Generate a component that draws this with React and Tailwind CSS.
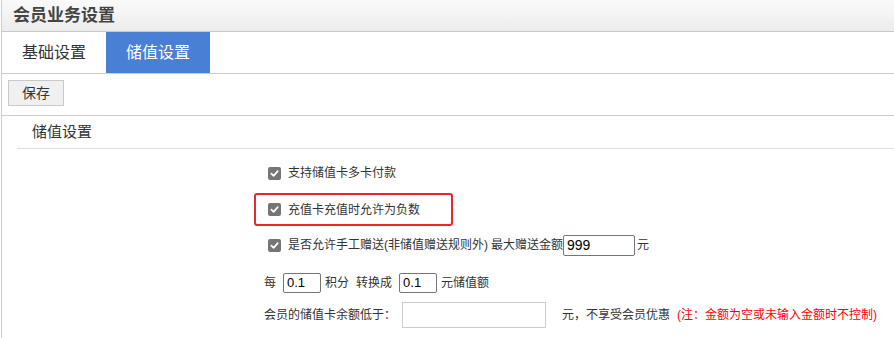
import React from "react";

const font = { fontFamily: '"Liberation Sans", "Noto Sans CJK SC", sans-serif' };

const Check = () => (
  <span className="ml-[4px] mr-[7px] flex h-[13px] w-[13px] shrink-0 items-center justify-center rounded-[2px] bg-[#767676]">
    <svg width="9" height="9" viewBox="0 0 10 10" fill="none">
      <path d="M1.5 5.2 L4 7.6 L8.6 2.4" stroke="#fff" strokeWidth="1.9" strokeLinecap="round" strokeLinejoin="round" />
    </svg>
  </span>
);

const SmallInput = ({ value, className }) => (
  <div className={`flex items-center rounded-[2px] border border-[#767676] bg-white px-[3px] text-[13px] text-black ${className}`}>
    {value}
  </div>
);

export default function App() {
  return (
    <div className="min-h-[338px] bg-white pl-px text-[#333]" style={font}>
      <div className="min-h-[338px] border-l border-[#cccccc]">
        {/* Header */}
        <div className="flex h-[32px] items-center border-b border-[#c8c8c8] bg-gradient-to-b from-[#fafafa] to-[#ececec] pl-[11px]">
          <span className="text-[17px] font-bold text-[#444]">会员业务设置</span>
        </div>

        {/* Tabs */}
        <div className="flex h-[42px] border-b border-[#cccccc]">
          <div className="flex w-[104px] items-center justify-center text-[16px] text-[#333]">基础设置</div>
          <div className="flex w-[104px] items-center justify-center bg-[#4a7fd6] text-[16px] text-white">储值设置</div>
        </div>

        {/* Toolbar */}
        <div className="h-[42px] border-b border-[#cccccc] pl-[6px] pt-[6px]">
          <button className="h-[26px] w-[56px] border border-[#c8c8c8] bg-[#f0f0f0] text-[14px] text-[#333]">保存</button>
        </div>

        {/* Section */}
        <div className="ml-[15px]">
          <div className="flex h-[33px] items-center border-b border-[#dddddd] pl-[15px] text-[15px] text-[#333]">储值设置</div>

          <div className="pl-[247px] pt-[14px] text-[12px] text-[#333]">
            <div className="flex h-[20px] items-center">
              <Check />
              <span>支持储值卡多卡付款</span>
            </div>

            <div className="-ml-[10px] mt-[10px] flex h-[33px] w-[199px] items-center rounded-[3px] border-2 border-[#e8262b] pl-[8px]">
              <Check />
              <span>充值卡充值时允许为负数</span>
            </div>

            <div className="mt-[8px] flex h-[22px] items-center">
              <Check />
              <span>是否允许手工赠送(非储值赠送规则外)</span>
              <span className="ml-[3px]">最大赠送金额</span>
              <SmallInput value="999" className="h-[21px] w-[72px] text-[14px]" />
              <span className="ml-[2px]">元</span>
            </div>

            <div className="mt-[17px] flex h-[20px] items-center">
              <span>每</span>
              <SmallInput value="0.1" className="ml-[7px] h-[20px] w-[38px]" />
              <span className="ml-[4px]">积分</span>
              <span className="ml-[7px]">转换成</span>
              <SmallInput value="0.1" className="ml-[7px] h-[20px] w-[38px]" />
              <span className="ml-[4px]">元储值额</span>
            </div>

            <div className="mt-[9px] flex h-[26px] items-center">
              <span className="w-[138px]">会员的储值卡余额低于：</span>
              <div className="h-[26px] w-[144px] border border-[#cccccc] bg-white" />
              <span className="ml-[16px]">元，不享受会员优惠</span>
              <span className="ml-[7px] text-[#ff0000]">(注：金额为空或未输入金额时不控制)</span>
            </div>
          </div>
        </div>
      </div>
    </div>
  );
}
